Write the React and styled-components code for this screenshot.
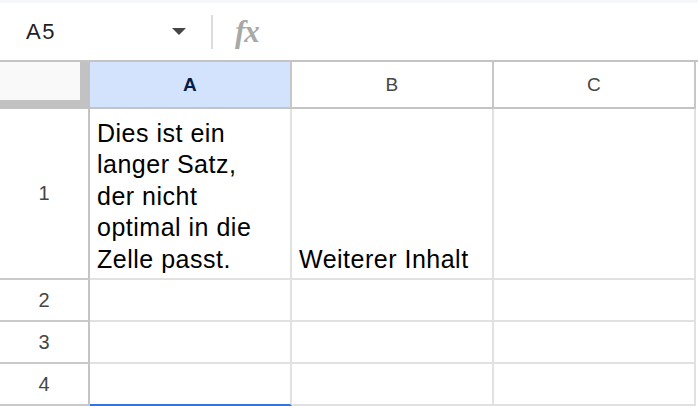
import React from "react"
import styled, { createGlobalStyle } from "styled-components"

const GlobalStyle = createGlobalStyle`
  html, body {
    margin: 0;
    padding: 0;
    background: #fff;
    overflow: hidden;
    font-family: "Liberation Sans", Arial, sans-serif;
  }
  * {
    box-sizing: border-box;
  }
`

const Page = styled.div`
  width: 698px;
  height: 406px;
  overflow: hidden;
`

const FormulaBar = styled.div`
  height: 60px;
  border-top: 3px solid #f5f6f7;
  display: flex;
  align-items: center;
`

const NameBox = styled.div`
  width: 198px;
  padding: 0 12px 0 26px;
  display: flex;
  align-items: center;
  justify-content: space-between;
  font-size: 22px;
  letter-spacing: 1.5px;
  color: #1f1f1f;
`

const Caret = styled.span`
  width: 0;
  height: 0;
  border-left: 7px solid transparent;
  border-right: 7px solid transparent;
  border-top: 7px solid #444746;
`

const Divider = styled.div`
  width: 2px;
  height: 34px;
  background: #dadce0;
  margin-left: 13px;
`

const Fx = styled.span`
  margin-left: 22px;
  font-family: "Liberation Serif", "Times New Roman", serif;
  font-style: italic;
  font-size: 31px;
  font-weight: 700;
  color: #a8a8a8;
  letter-spacing: -1px;
`

const Grid = styled.div`
  border-top: 2px solid #c4c4c4;
`

const Row = styled.div`
  display: flex;
  height: ${(p) => p.$height}px;
`

const Corner = styled.div`
  width: 90px;
  height: 47px;
  background: #f9f9f9;
  border-right: 10px solid #c2c2c2;
  border-bottom: 9px solid #c2c2c2;
`

const ColHeader = styled.div`
  width: 202px;
  height: 47px;
  display: flex;
  align-items: center;
  justify-content: center;
  font-size: 19px;
  letter-spacing: 0.5px;
  background: ${(p) => (p.$active ? "#d3e3fd" : "#fff")};
  color: ${(p) => (p.$active ? "#041e49" : "#444746")};
  font-weight: ${(p) => (p.$active ? 700 : 400)};
  border-right: 2px solid #c7c7c7;
  border-bottom: 2px solid #c4c4c4;
`

const RowHeader = styled.div`
  width: 90px;
  display: flex;
  align-items: center;
  justify-content: center;
  font-size: 20px;
  color: #444746;
  border-right: 2px solid #c4c4c4;
  border-bottom: 2px solid #c9c9c9;
`

const Cell = styled.div`
  width: 202px;
  display: flex;
  flex-direction: column;
  justify-content: flex-end;
  padding: 0 7px 3px;
  font-size: 25px;
  line-height: 31.5px;
  letter-spacing: 0.5px;
  color: #000;
  border-right: 2px solid #e1e1e1;
  border-bottom: 2px solid ${(p) => (p.$selectedBelow ? "#3574db" : "#e1e1e1")};
`

const WrapText = styled.div`
  max-width: 180px;
  white-space: normal;
`

const NoWrap = styled.div`
  white-space: nowrap;
`

const columns = ["A", "B", "C"]

const rows = [
  {
    n: 1,
    height: 171,
    cells: [
      <WrapText>Dies ist ein langer Satz, der nicht optimal in die Zelle passt.</WrapText>,
      <NoWrap>Weiterer Inhalt</NoWrap>,
      null,
    ],
  },
  { n: 2, height: 42, cells: [null, null, null] },
  { n: 3, height: 42, cells: [null, null, null] },
  { n: 4, height: 42, cells: [null, null, null], selectedBelow: 0 },
]

const App = () => {
  return (
    <Page>
      <GlobalStyle />
      <FormulaBar>
        <NameBox>
          A5
          <Caret />
        </NameBox>
        <Divider />
        <Fx>fx</Fx>
      </FormulaBar>
      <Grid>
        <Row $height={47}>
          <Corner />
          {columns.map((c) => (
            <ColHeader key={c} $active={c === "A"}>
              {c}
            </ColHeader>
          ))}
        </Row>
        {rows.map((r) => (
          <Row key={r.n} $height={r.height}>
            <RowHeader>{r.n}</RowHeader>
            {r.cells.map((content, i) => (
              <Cell key={i} $selectedBelow={r.selectedBelow === i}>
                {content}
              </Cell>
            ))}
          </Row>
        ))}
      </Grid>
    </Page>
  )
}

export default App
